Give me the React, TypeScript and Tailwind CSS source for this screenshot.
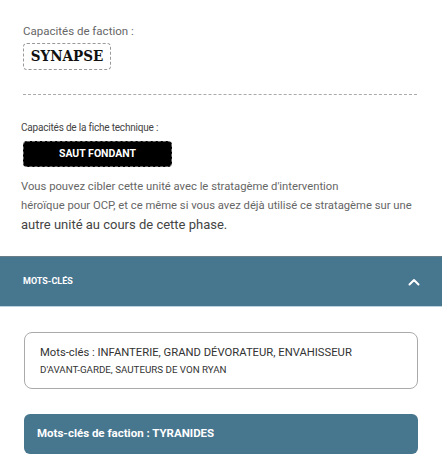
import React from "react";

export default function App() {
  return (
    <div className="w-[442px] h-[465px] overflow-hidden bg-white font-['Roboto',sans-serif]">
      <div className="px-[23px] pt-[24px]">
        <p className="text-[11.5px] leading-[14px] text-[#666]">Capacités de faction :</p>
        <div className="mt-[5px] flex h-[27px] w-[88px] items-center justify-center rounded-[4px] border border-dashed border-[#999]">
          <span className="font-['DejaVu_Serif_Condensed','DejaVu_Serif',serif] text-[15px] font-bold text-[#111]">SYNAPSE</span>
        </div>
        <div className="mt-[24px] mr-[2px] border-t border-dashed border-[#aaa]"></div>
      </div>
      <div className="px-[21px] pt-[27px]">
        <p className="text-[10px] leading-[12px] tracking-[-0.2px] text-[#444]">Capacités de la fiche technique :</p>
        <div className="ml-[2px] mt-[7px] flex h-[26px] w-[149px] items-center justify-center rounded-[4px] border border-dashed border-[#666] bg-black">
          <span className="text-[10.5px] font-bold text-white">SAUT FONDANT</span>
        </div>
        <p className="mt-[10px] text-[11.25px] leading-[19px] text-[#666]">
          <span className="block">Vous pouvez cibler cette unité avec le stratagème d'intervention</span>
          <span className="block">héroïque pour OCP, et ce même si vous avez déjà utilisé ce stratagème sur une</span>
          <span className="block text-[13px] text-[#444]">autre unité au cours de cette phase.</span>
        </p>
      </div>
      <div className="mt-[22px] flex h-[51px] items-center justify-between border-t border-b border-t-[#6a7c88] border-b-[#bcd2df] bg-[#47768f] pl-[23px] pr-[22px]">
        <span className="text-[9px] font-bold text-white">MOTS-CLÉS</span>
        <svg width="12" height="8" viewBox="0 0 12 8" fill="none">
          <path d="M1.5 6.5 L6 2 L10.5 6.5" stroke="white" strokeWidth="2" strokeLinecap="round" strokeLinejoin="round" />
        </svg>
      </div>
      <div className="mx-[24px] mt-[25px] flex h-[57px] flex-col justify-center rounded-[8px] border border-[#aaa] pl-[15px]">
        <p className="text-[11.25px] leading-[16px] text-[#333]">Mots-clés : INFANTERIE, GRAND DÉVORATEUR, ENVAHISSEUR</p>
        <p className="mt-[3px] text-[9.75px] leading-[12px] text-[#333]">D'AVANT-GARDE, SAUTEURS DE VON RYAN</p>
      </div>
      <div className="mx-[24px] mt-[25px] flex h-[40px] items-center rounded-[6px] bg-[#47768f] pl-[13px]">
        <span className="text-[11.5px] font-bold text-white">Mots-clés de faction : TYRANIDES</span>
      </div>
    </div>
  );
}
